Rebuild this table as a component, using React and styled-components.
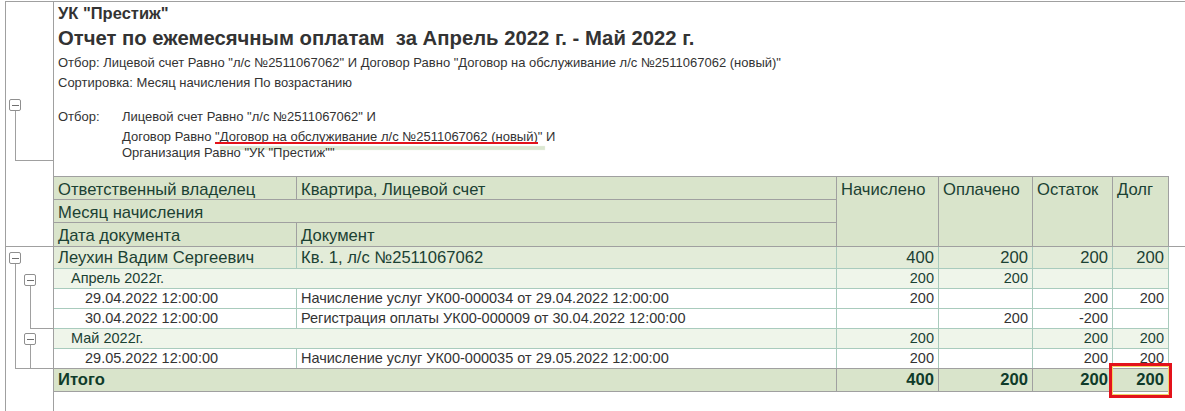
import React from 'react'
import styled, { createGlobalStyle } from 'styled-components'

const GRID = '#a0a0a0'
const TEAL = '#a9cbbd'
const HEAD_BG = '#d9e4cb'
const GREEN_TEXT = '#1b4133'

const GlobalStyle = createGlobalStyle`
  html, body {
    margin: 0;
    padding: 0;
    background: #fff;
  }
  body {
    font-family: 'Liberation Sans', Arial, sans-serif;
    color: #333;
  }
`

const Sheet = styled.div`
  margin: 1px 0 0 5px;
  min-height: calc(100vh - 1px);
  box-sizing: border-box;
  border-left: 1px solid ${GRID};
  border-top: 1px solid ${GRID};
  display: grid;
  grid-template-columns: 48px 1fr;
  grid-template-rows: auto auto 1fr;
`

const Gutter = styled.div`
  border-right: 1px solid ${GRID};
  border-top: ${p => (p.$split ? `1px solid ${GRID}` : 'none')};

  svg {
    display: block;
  }
`

const Main = styled.div`
  min-width: 0;
  border-top: ${p => (p.$split ? `1px solid ${GRID}` : 'none')};
`

const Org = styled.div`
  padding-left: 4px;
  font-size: 16.5px;
  line-height: 22px;
  font-weight: bold;
`

const Title = styled.div`
  padding-left: 4px;
  font-size: 20.3px;
  line-height: 29px;
  font-weight: bold;
  white-space: pre;
`

const Note = styled.div`
  padding-left: 4px;
  font-size: 13px;
  line-height: 20px;
  white-space: nowrap;
`

const Filter = styled.div`
  display: grid;
  grid-template-columns: 64px auto;
  margin-top: 14px;
  padding-left: 4px;
  font-size: 13px;
`

const FilterText = styled.div`
  position: relative;
  grid-column: ${p => p.$col || 2};
  line-height: ${p => p.$h || 20}px;
  height: ${p => p.$h || 20}px;
  white-space: nowrap;
`

const Marked = styled.span`
  position: relative;

  &::after {
    content: '';
    position: absolute;
    left: 0;
    right: 0;
    bottom: 0;
    height: 2px;
    background: #e3121b;
    box-shadow: 6px 5px 1px 1px #dbe7d1;
  }
`

const HeadGrid = styled.div`
  margin-top: 17px;
  width: 1115px;
  display: grid;
  grid-template-columns: 243px 540px 102px 94px 80px 56px;
  grid-template-rows: 23px 23px 23px;
  border-top: 1px solid ${GRID};
  background: ${HEAD_BG};
  color: ${GREEN_TEXT};
  font-size: 16.6px;
`

const HeadCell = styled.div`
  grid-column: ${p => p.$col};
  grid-row: ${p => p.$row};
  box-sizing: border-box;
  padding: 3px 4px 0;
  line-height: 19px;
  white-space: nowrap;
  border-right: 1px solid ${GRID};
  border-bottom: ${p => (p.$open ? 'none' : `1px solid ${GRID}`)};
`

const KINDS = {
  owner: { bg: '#e3ecd9', h: 21, size: 16.6, color: GREEN_TEXT, pad: 4, line: TEAL, bold: false },
  month: { bg: '#eff5ea', h: 19, size: 14.5, color: GREEN_TEXT, pad: 17, line: TEAL, bold: false },
  doc: { bg: '#fff', h: 19, size: 14.5, color: '#333', pad: 31, line: TEAL, bold: false },
  total: { bg: HEAD_BG, h: 22, size: 16.6, color: '#0f3b2a', pad: 4, line: GRID, bold: true }
}

const Row = styled.div`
  width: 1115px;
  display: grid;
  grid-template-columns: ${p => (p.$span ? '783px' : '243px 540px')} 102px 94px 80px 56px;
  height: ${p => KINDS[p.$kind].h}px;
  line-height: ${p => KINDS[p.$kind].h}px;
  background: ${p => KINDS[p.$kind].bg};
  color: ${p => KINDS[p.$kind].color};
  font-size: ${p => KINDS[p.$kind].size}px;
  font-weight: ${p => (KINDS[p.$kind].bold ? 'bold' : 'normal')};
  border-top: ${p => (p.$kind === 'total' ? `1px solid ${GRID}` : 'none')};
  border-bottom: ${p => (p.$last ? 'none' : `1px solid ${KINDS[p.$kind].line}`)};
`

const Cell = styled.div`
  position: relative;
  box-sizing: border-box;
  white-space: nowrap;
  border-right: 1px solid ${p => KINDS[p.$kind].line};
  padding: ${p => (p.$num ? '0 4px 0 0' : `0 0 0 ${p.$pad ?? KINDS[p.$kind].pad}px`)};
  text-align: ${p => (p.$num ? 'right' : 'left')};

  ${p =>
    p.$flag &&
    `
    &::after {
      content: '';
      position: absolute;
      top: -6px;
      right: -4px;
      bottom: -7px;
      left: -4px;
      border: 3px solid #e3121b;
      box-shadow: inset 0 0 0 1px #f1d36a;
      z-index: 2;
    }
  `}
`

const rows = [
  { kind: 'owner', a: 'Леухин Вадим Сергеевич', b: 'Кв. 1, л/с №2511067062', n: ['400', '200', '200', '200'] },
  { kind: 'month', a: 'Апрель 2022г.', span: true, n: ['200', '200', '', ''] },
  { kind: 'doc', a: '29.04.2022 12:00:00', b: 'Начисление услуг УК00-000034 от 29.04.2022 12:00:00', n: ['200', '', '200', '200'] },
  { kind: 'doc', a: '30.04.2022 12:00:00', b: 'Регистрация оплаты УК00-000009 от 30.04.2022 12:00:00', n: ['', '200', '-200', ''] },
  { kind: 'month', a: 'Май 2022г.', span: true, n: ['200', '', '200', '200'] },
  { kind: 'doc', a: '29.05.2022 12:00:00', b: 'Начисление услуг УК00-000035 от 29.05.2022 12:00:00', n: ['200', '', '200', '200'], last: true },
  { kind: 'total', a: 'Итого', span: true, n: ['400', '200', '200', '200'], flag: true }
]

const Toggle = ({ x, y }) => (
  <g>
    <rect x={x + 0.5} y={y + 0.5} width="11" height="11" rx="1.5" fill="#fff" stroke="#8f8f8f" />
    <line x1={x + 3} y1={y + 6.5} x2={x + 10} y2={y + 6.5} stroke="#6f6f6f" />
  </g>
)

const HeaderTree = () => (
  <svg width="47" height="175">
    <g stroke={GRID} fill="none">
      <line x1="9.5" y1="109" x2="9.5" y2="158.5" />
      <line x1="9" y1="158.5" x2="47" y2="158.5" />
    </g>
    <Toggle x={3} y={97} />
  </svg>
)

const DataTree = () => (
  <svg width="47" height="144">
    <g stroke={GRID} fill="none">
      <line x1="9.5" y1="17" x2="9.5" y2="121.5" />
      <line x1="9" y1="121.5" x2="47" y2="121.5" />
      <line x1="24.5" y1="39" x2="24.5" y2="81.5" />
      <line x1="24" y1="81.5" x2="47" y2="81.5" />
      <line x1="24.5" y1="98" x2="24.5" y2="121.5" />
    </g>
    <Toggle x={3} y={5} />
    <Toggle x={18} y={27} />
    <Toggle x={18} y={86} />
  </svg>
)

export default function App() {
  return (
    <>
      <GlobalStyle />
      <Sheet>
        <Gutter>
          <HeaderTree />
        </Gutter>
        <Main>
          <Org>УК "Престиж"</Org>
          <Title>Отчет по ежемесячным оплатам  за Апрель 2022 г. - Май 2022 г.</Title>
          <Note>
            Отбор: Лицевой счет Равно "л/с №2511067062" И Договор Равно "Договор на обслуживание л/с №2511067062 (новый)"
          </Note>
          <Note>Сортировка: Месяц начисления По возрастанию</Note>
          <Filter>
            <FilterText $col={1}>Отбор:</FilterText>
            <FilterText>Лицевой счет Равно "л/с №2511067062" И</FilterText>
            <FilterText>
              Договор Равно <Marked>"Договор на обслуживание л/с №2511067062 (новый)</Marked>" И
            </FilterText>
            <FilterText $h={12}>Организация Равно "УК "Престиж""</FilterText>
          </Filter>
          <HeadGrid>
            <HeadCell $col="1" $row="1">Ответственный владелец</HeadCell>
            <HeadCell $col="2" $row="1">Квартира, Лицевой счет</HeadCell>
            <HeadCell $col="1 / 3" $row="2">Месяц начисления</HeadCell>
            <HeadCell $col="1" $row="3" $open>Дата документа</HeadCell>
            <HeadCell $col="2" $row="3" $open>Документ</HeadCell>
            <HeadCell $col="3" $row="1 / 4" $open>Начислено</HeadCell>
            <HeadCell $col="4" $row="1 / 4" $open>Оплачено</HeadCell>
            <HeadCell $col="5" $row="1 / 4" $open>Остаток</HeadCell>
            <HeadCell $col="6" $row="1 / 4" $open>Долг</HeadCell>
          </HeadGrid>
        </Main>

        <Gutter $split>
          <DataTree />
        </Gutter>
        <Main $split>
          {rows.map((r, i) => (
            <Row key={i} $kind={r.kind} $span={r.span} $last={r.last}>
              <Cell $kind={r.kind}>{r.a}</Cell>
              {!r.span && (
                <Cell $kind={r.kind} $pad={4}>
                  {r.b}
                </Cell>
              )}
              {r.n.map((v, j) => (
                <Cell key={j} $kind={r.kind} $num $flag={r.flag && j === 3}>
                  {v}
                </Cell>
              ))}
            </Row>
          ))}
        </Main>

        <Gutter />
        <Main />
      </Sheet>
    </>
  )
}
